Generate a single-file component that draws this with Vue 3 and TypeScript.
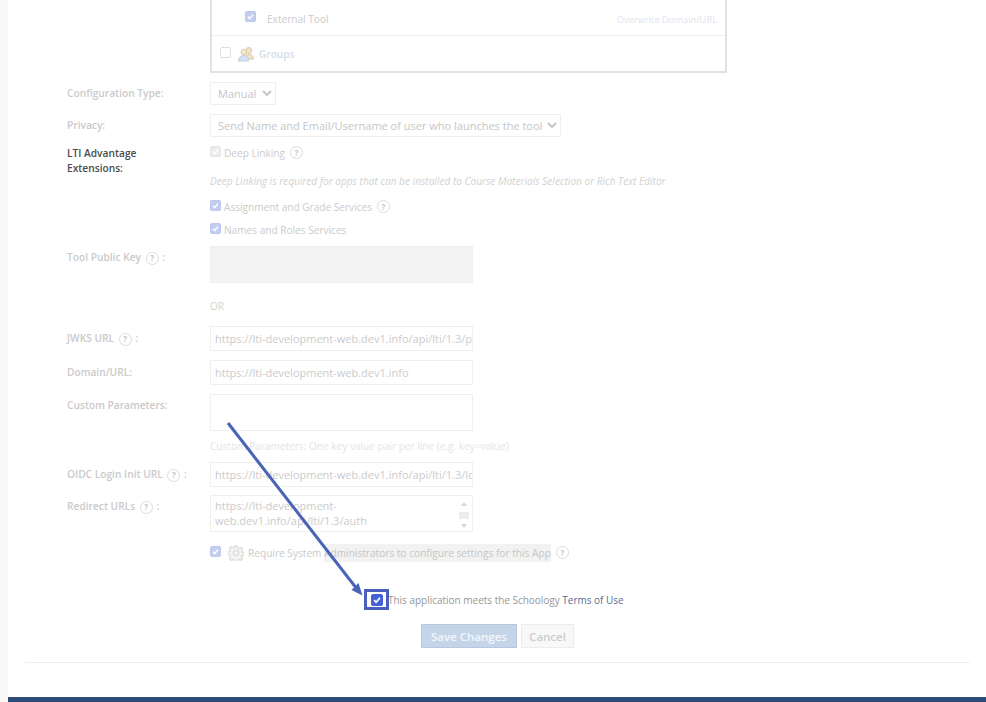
<template>
  <div class="page">
    <div class="sheet">
      <form class="app-form" @submit.prevent>
        <!-- permissions box, top is scrolled away -->
        <div class="perm-box">
          <div class="perm-row perm-row--child">
            <span class="cb cb--on"><svg viewBox="0 0 12 12"><path d="M2.500 6.200l2.400 2.500 4.600-5.200" /></svg></span>
            <span class="perm-name">External Tool</span>
            <a class="overwrite">Overwrite Domain/URL</a>
          </div>
          <div class="perm-row perm-row--group">
            <span class="cb"></span>
            <svg class="groups-icon" viewBox="0 0 16 16">
              <circle cx="10.800" cy="4.400" r="2.900" fill="#f1e6cc" stroke="#d9c9a2" />
              <path d="M6.500 13c0-3 2-4.600 4.300-4.600S15.500 10 15.500 13z" fill="#efe5c9" stroke="#d9c9a2" />
              <circle cx="5.800" cy="6" r="2.700" fill="#f3e9d3" stroke="#d9c9a2" />
              <path d="M.5 15c0-3.300 2.200-5.500 5-5.500s5 2.200 5 5.500z" fill="#d5e2f2" stroke="#bfd0e6" />
            </svg>
            <a class="group-link">Groups</a>
          </div>
        </div>

        <div class="row row--select row--config">
          <label class="lbl">Configuration Type:</label>
          <select class="ctl-select"><option>Manual</option></select>
        </div>
        <div class="row row--select row--privacy">
          <label class="lbl">Privacy:</label>
          <select class="ctl-select"><option>Send Name and Email/Username of user who launches the tool</option></select>
        </div>

        <div class="row row--lti">
          <label class="lbl lbl--dark">LTI Advantage Extensions:</label>
          <div class="lti-opts">
            <div class="opt opt--deep">
              <span class="cb cb--disabled"><svg viewBox="0 0 12 12"><path d="M2.500 6.200l2.400 2.500 4.600-5.200" /></svg></span>
              <span>Deep Linking</span>
              <span class="help">?</span>
            </div>
            <p class="note">Deep Linking is required for apps that can be installed to Course Materials Selection or Rich Text Editor</p>
            <div class="opt opt--grade">
              <span class="cb cb--on"><svg viewBox="0 0 12 12"><path d="M2.500 6.200l2.400 2.500 4.600-5.200" /></svg></span>
              <span>Assignment and Grade Services</span>
              <span class="help">?</span>
            </div>
            <div class="opt opt--roles">
              <span class="cb cb--on"><svg viewBox="0 0 12 12"><path d="M2.500 6.200l2.400 2.500 4.600-5.200" /></svg></span>
              <span>Names and Roles Services</span>
            </div>
          </div>
        </div>

        <div class="row row--key">
          <label class="lbl">Tool Public Key <span class="help">?</span> :</label>
          <div class="area area--key"></div>
        </div>
        <div class="or">OR</div>

        <div class="row row--jwks">
          <label class="lbl">JWKS URL <span class="help">?</span> :</label>
          <input class="ctl-input" value="https://lti-development-web.dev1.info/api/lti/1.3/public_key" readonly />
        </div>
        <div class="row row--domain">
          <label class="lbl">Domain/URL:</label>
          <input class="ctl-input" value="https://lti-development-web.dev1.info" readonly />
        </div>
        <div class="row row--params">
          <label class="lbl">Custom Parameters:</label>
          <div class="area"></div>
        </div>
        <div class="hint">Custom Parameters: One key value pair per line (e.g. key=value)</div>
        <div class="row row--oidc">
          <label class="lbl">OIDC Login Init URL <span class="help">?</span> :</label>
          <input class="ctl-input" value="https://lti-development-web.dev1.info/api/lti/1.3/login" readonly />
        </div>
        <div class="row row--redirect">
          <label class="lbl">Redirect URLs <span class="help">?</span> :</label>
          <div class="area area--urls">
            <span class="urls-text">https://lti-development-web.dev1.info/api/lti/1.3/auth</span>
            <span class="scroll">
              <i class="arrow-up"></i>
              <i class="thumb"></i>
              <i class="arrow-down"></i>
            </span>
          </div>
        </div>

        <div class="row row--admin">
          <span class="lbl"></span>
          <div class="opt">
            <span class="cb cb--on"><svg viewBox="0 0 12 12"><path d="M2.500 6.200l2.400 2.500 4.600-5.200" /></svg></span>
            <svg class="gear" viewBox="0 0 16 16">
              <path d="M6.700.8h2.600l.4 2 1.400.6 1.700-1.100 1.800 1.800-1.100 1.700.6 1.400 2 .4v2.600l-2 .4-.6 1.400 1.100 1.700-1.800 1.800-1.700-1.100-1.400.6-.4 2H6.700l-.4-2-1.400-.6-1.700 1.100-1.800-1.800 1.100-1.700-.6-1.400-2-.4V6.700l2-.4.6-1.400-1.100-1.700 1.800-1.800 1.700 1.100 1.400-.6z" />
              <circle cx="8" cy="8" r="2.600" />
            </svg>
            <span class="admin-text">Require System <mark>Administrators to configure settings for this App</mark></span>
            <span class="help">?</span>
          </div>
        </div>

        <div class="terms">
          <span class="terms-mark"><span class="cb cb--blue"><svg viewBox="0 0 12 12"><path d="M2.500 6.200l2.400 2.500 4.600-5.200" /></svg></span></span>
          <span class="terms-text">This application meets the Schoology <a class="terms-link">Terms of Use</a></span>
        </div>

        <div class="actions">
          <button class="btn btn--save" type="submit">Save Changes</button>
          <button class="btn btn--cancel" type="button">Cancel</button>
        </div>
        <div class="rule"></div>
      </form>
      <div class="footer-bar"></div>

      <!-- annotation drawn over the page -->
      <svg class="callout" viewBox="0 0 986 702">
        <path d="M228 423L357 589" stroke="#4a63b8" stroke-width="3" fill="none" />
        <path d="M362.500 595.500l-11-5.500 7-7z" fill="#4a63b8" />
      </svg>
    </div>
  </div>
</template>

<script setup lang="ts">
</script>

<style>
html,
body {
  background: #f9f8f6;
}
</style>

<style scoped>
.page {
  height: 702px;
  overflow: hidden;
  padding-left: 8px;
  font-family: "Open Sans", "Liberation Sans", sans-serif;
  font-size: 10.100px;
  color: #cbcbcb;
}

.sheet {
  position: relative;
  height: 702px;
  background: #fff;
  display: flex;
  flex-direction: column;
}

.app-form {
  flex: 1;
  padding-left: 59px;
}

.perm-box {
  width: 517px;
  height: 73px;
  margin-left: 143px;
  border: 2px solid #e2e2e2;
  border-top: 0;
  box-sizing: border-box;
}

.perm-row {
  display: flex;
  align-items: center;
}

.perm-row--child {
  height: 35px;
  padding: 0 8px 0 33px;
  border-bottom: 1px solid #efefef;
}

.perm-row--group {
  height: 36px;
  padding-left: 8px;
}

.perm-name {
  margin-left: 11px;
  margin-top: 3px;
}

.overwrite {
  margin-left: auto;
  margin-top: 4px;
  font-size: 9.300px;
  color: #dfe3ee;
}

.groups-icon {
  width: 16px;
  height: 16px;
  margin-left: 7px;
}

.group-link {
  margin-left: 5px;
  font-weight: 600;
  color: #d3deec;
}

.cb {
  flex: none;
  display: inline-flex;
  width: 9px;
  height: 9px;
  margin-top: -3px;
  border: 1px solid #dedede;
  border-radius: 2px;
  background: #fff;
}

.cb svg {
  width: 100%;
  height: 100%;
  fill: none;
  stroke: #fff;
  stroke-width: 2;
}

.cb--on {
  background: #c3cdf0;
  border-color: #bcc8ee;
}

.cb--disabled {
  background: #ececec;
  border-color: #e6e6e6;
}

.cb--blue {
  width: 10px;
  height: 10px;
  margin-top: 0;
  background: #4560d6;
  border-color: #4560d6;
}

.row {
  display: flex;
  align-items: flex-start;
}

.lbl {
  flex: none;
  width: 143px;
  box-sizing: border-box;
  font-size: 10.200px;
  font-weight: 600;
  line-height: 15px;
  color: #cacaca;
}

.lbl--dark {
  width: 143px;
  padding-right: 50px;
  color: #4c4c4c;
}

.row--select .lbl {
  padding-top: 4px;
}

.row--config {
  margin-top: 9px;
}

.row--privacy {
  margin-top: 9px;
}

.ctl-select {
  height: 23px;
  padding: 0 2px 0 3px;
  border: 1px solid #efefef;
  border-radius: 0;
  background: #fff;
  color: #c6c6c6;
  font: 11px "Open Sans", "Liberation Sans", sans-serif;
}

.row--privacy .ctl-select {
  width: 351px;
}

.row--config .ctl-select {
  width: 66px;
}

.row--lti {
  margin-top: 9px;
}

.lti-opts {
  flex: 1;
  margin-top: -1px;
}

.opt {
  display: flex;
  align-items: center;
  height: 15px;
  gap: 3px;
}

.note {
  margin: 14px 0 0;
  height: 15px;
  line-height: 15px;
  font-size: 10.100px;
  font-style: italic;
  color: #d2d2d2;
}

.opt--grade {
  margin-top: 10px;
}

.opt--roles {
  margin-top: 8px;
}

.help {
  display: inline-flex;
  align-items: center;
  justify-content: center;
  width: 11px;
  height: 11px;
  margin: 0 1px 0 2px;
  border: 1px solid #dcdcdc;
  border-radius: 50%;
  font-size: 8px;
  font-weight: 700;
  line-height: 1;
  color: #c4c4c4;
}

.row--key {
  margin-top: 9px;
}

.row--key .lbl,
.row--params .lbl {
  padding-top: 4px;
}

.area {
  width: 263px;
  height: 37px;
  box-sizing: border-box;
  border: 1px solid #efefef;
  background: #fff;
}

.area--key {
  background: #f3f3f3;
}

.or {
  margin: 16px 0 0 143px;
  height: 15px;
  line-height: 15px;
  color: #d2d2d2;
}

.ctl-input {
  width: 263px;
  height: 25px;
  box-sizing: border-box;
  padding: 0 0 0 4px;
  border: 1px solid #efefef;
  background: #fff;
  color: #cbcbcb;
  font: 11px "Open Sans", "Liberation Sans", sans-serif;
  outline: none;
}

.row--jwks,
.row--domain,
.row--oidc {
  align-items: center;
}

.row--jwks {
  margin-top: 12px;
}

.row--domain {
  margin-top: 9px;
}

.row--params {
  margin-top: 9px;
}

.hint {
  margin: 8px 0 0 143px;
  height: 15px;
  line-height: 15px;
  font-size: 10.100px;
  color: #e4e4e4;
}

.row--oidc {
  margin-top: 8px;
}

.row--redirect {
  margin-top: 8px;
}

.row--redirect .lbl {
  padding-top: 4px;
}

.area--urls {
  display: flex;
  padding: 2px 3px 3px 4px;
  font-size: 11px;
  line-height: 15px;
  color: #cbcbcb;
}

.urls-text {
  flex: 1;
}

.scroll {
  flex: none;
  width: 10px;
  display: flex;
  flex-direction: column;
  align-items: center;
  justify-content: space-between;
  padding: 4px 0 0;
}

.arrow-up {
  border: 3px solid transparent;
  border-top: 0;
  border-bottom: 4px solid #d8d8d8;
}

.arrow-down {
  border: 3px solid transparent;
  border-bottom: 0;
  border-top: 4px solid #d8d8d8;
}

.thumb {
  width: 10px;
  height: 7px;
  background: #ececec;
}

.row--admin {
  margin-top: 13px;
  height: 15px;
}

.gear {
  width: 16px;
  height: 16px;
  margin: 0 1px 0 4px;
  fill: #f3f3f3;
  stroke: #dcdcdc;
  stroke-width: 1.200;
}

.admin-text {
  font-size: 10.150px;
}

.admin-text mark {
  background: #f2f2f2;
  color: #c6c6c6;
  padding: 2px 0;
}

.terms {
  display: flex;
  align-items: center;
  height: 21px;
  margin: 29px 0 0 297px;
  color: #969696;
  font-size: 9.970px;
}

.terms-mark {
  display: flex;
  align-items: center;
  justify-content: center;
  position: relative;
  width: 25px;
  height: 21px;
  box-sizing: border-box;
  border: 3px solid #4a5fbf;
  background: #fff;
}

.terms-text {
  margin-left: -1px;
}

.terms-link {
  color: #5b6b95;
}

.actions {
  display: flex;
  gap: 4px;
  margin: 14px 0 0 354px;
}

.btn {
  height: 24px;
  box-sizing: border-box;
  border: 1px solid #d8d8d8;
  font: 600 11.500px "Open Sans", "Liberation Sans", sans-serif;
  padding: 0;
}

.btn--save {
  width: 96px;
  background: #c5d5e9;
  border-color: #b8c8dc;
  color: #f3f6fa;
}

.btn--cancel {
  width: 53px;
  background: #f8f8f8;
  border-color: #ececec;
  color: #cdcdcd;
}

.rule {
  height: 1px;
  margin: 14px 16px 0 -42px;
  background: #efefef;
}

.footer-bar {
  flex: none;
  height: 5px;
  background: #2c4a76;
}

.callout {
  position: absolute;
  left: -8px;
  top: 0;
  width: 986px;
  height: 702px;
  pointer-events: none;
}
</style>
